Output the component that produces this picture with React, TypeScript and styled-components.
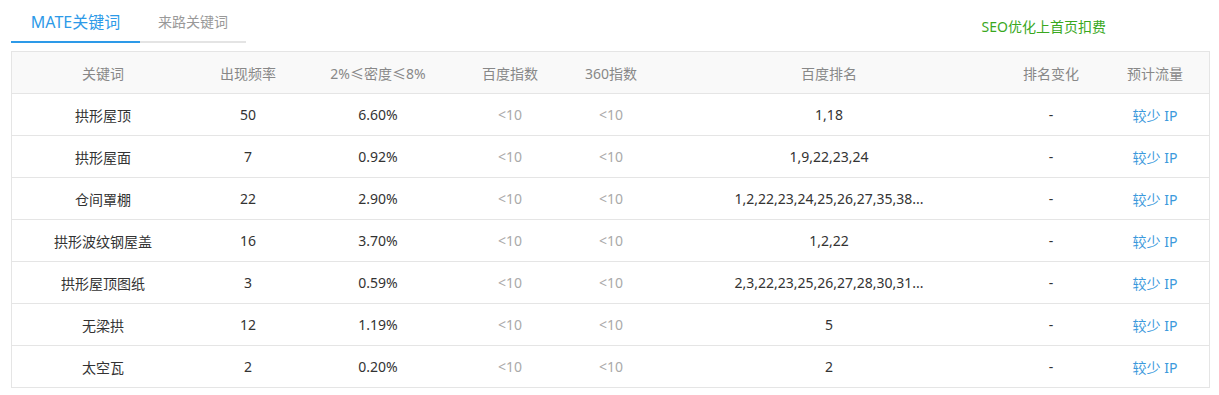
import styled, { createGlobalStyle } from "styled-components"

const GlobalStyle = createGlobalStyle`
  body {
    margin: 0;
    background: #fff;
    font-family: "Noto Sans", "Noto Sans CJK SC", sans-serif;
  }
`

const Page = styled.div`
  width: 1199px;
  padding-left: 11px;
`

const TopBar = styled.div`
  display: flex;
  justify-content: space-between;
  align-items: flex-start;
`

const Tabs = styled.div`
  display: flex;
`

const Tab = styled.div<{ $active?: boolean }>`
  width: ${(p) => (p.$active ? "129px" : "106px")};
  height: 41px;
  display: flex;
  align-items: center;
  justify-content: center;
  border-bottom: 2px solid ${(p) => (p.$active ? "#2d9ae8" : "#e4e4e4")};
  color: ${(p) => (p.$active ? "#2d9ae8" : "#999")};
  font-size: ${(p) => (p.$active ? "16px" : "14px")};
`

const SeoLink = styled.a`
  margin-top: 16px;
  margin-right: 104px;
  font-size: 14px;
  color: #3aa81e;
  text-decoration: none;
`

const Table = styled.div`
  margin-top: 8px;
  border: 1px solid #e5e5e5;
  border-bottom: none;
`

const cols = "182px 108px 152px 112px 90px 346px 98px 110px"

const HeadRow = styled.div`
  display: grid;
  grid-template-columns: ${cols};
  height: 41px;
  background: #f9f9f9;
  border-bottom: 1px solid #e5e5e5;
`

const Row = styled.div`
  display: grid;
  grid-template-columns: ${cols};
  height: 41px;
  border-bottom: 1px solid #e5e5e5;
`

const Cell = styled.div<{ $tone?: "head" | "dark" | "muted" | "link" }>`
  display: flex;
  align-items: center;
  justify-content: center;
  font-size: 14px;
  white-space: nowrap;
  color: ${(p) =>
    p.$tone === "head" ? "#888" : p.$tone === "muted" ? "#aaa" : p.$tone === "link" ? "#3b99dc" : "#333"};
`

const heads = ["关键词", "出现频率", "2%≤密度≤8%", "百度指数", "360指数", "百度排名", "排名变化", "预计流量"]

const rows = [
  ["拱形屋顶", "50", "6.60%", "1,18"],
  ["拱形屋面", "7", "0.92%", "1,9,22,23,24"],
  ["仓间罩棚", "22", "2.90%", "1,2,22,23,24,25,26,27,35,38..."],
  ["拱形波纹钢屋盖", "16", "3.70%", "1,2,22"],
  ["拱形屋顶图纸", "3", "0.59%", "2,3,22,23,25,26,27,28,30,31..."],
  ["无梁拱", "12", "1.19%", "5"],
  ["太空瓦", "2", "0.20%", "2"],
]

export default function App() {
  return (
    <Page>
      <GlobalStyle />
      <TopBar>
        <Tabs>
          <Tab $active>MATE关键词</Tab>
          <Tab>来路关键词</Tab>
        </Tabs>
        <SeoLink href="#">SEO优化上首页扣费</SeoLink>
      </TopBar>
      <Table>
        <HeadRow>
          {heads.map((h) => (
            <Cell key={h} $tone="head">{h}</Cell>
          ))}
        </HeadRow>
        {rows.map((r) => (
          <Row key={r[0]}>
            <Cell>{r[0]}</Cell>
            <Cell>{r[1]}</Cell>
            <Cell>{r[2]}</Cell>
            <Cell $tone="muted">&lt;10</Cell>
            <Cell $tone="muted">&lt;10</Cell>
            <Cell>{r[3]}</Cell>
            <Cell>-</Cell>
            <Cell $tone="link">较少 IP</Cell>
          </Row>
        ))}
      </Table>
    </Page>
  )
}
